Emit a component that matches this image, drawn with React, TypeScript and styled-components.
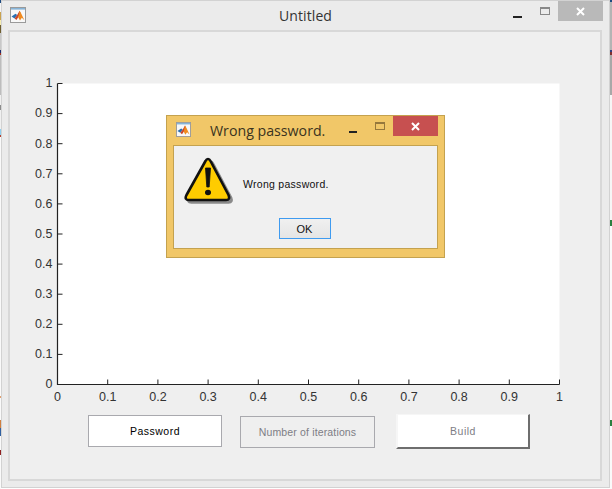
import React from "react";
import styled, { createGlobalStyle } from "styled-components";

const Global = createGlobalStyle`
  html, body { margin: 0; padding: 0; background: #fff; }
  #root { width: 612px; height: 489px; overflow: hidden; }
`;

const Desktop = styled.div`
  position: relative;
  width: 612px;
  height: 489px;
  overflow: hidden;
  background-color: #fff;
  background-image:
    linear-gradient(to bottom,
      #1d4a80 0 3px, #f4f4f4 3px 12px, #c9a24e 12px 20px, #f5ecb0 20px 25px, #6f5f30 25px 33px,
      #c8c8c8 33px 50px, #1c2c70 50px 53px, #a03020 53px 55px, #bdbdbd 55px 95px, #f0f0f0 95px 105px,
      #8c8c8c 105px 110px, #f0f0f0 110px 129px, #8fd0f0 129px 135px, #b04030 135px 137px, #fafafa 137px 396px,
      #e0a070 396px 398px, #fafafa 398px 420px, #d08040 420px 428px, #3060a0 428px 436px, #fafafa 436px 450px,
      #902020 450px 455px, #fafafa 455px),
    linear-gradient(to bottom,
      #1d4a80 0 2px, #b4b4b4 2px 50px, #304080 50px 52px, #803030 52px 55px, #a8a8a8 55px 95px,
      #f6f6f6 95px 220px, #2a8040 220px 226px, #fafafa 226px 420px, #2a8040 420px 426px, #fafafa 426px);
  background-size: 1px 100%, 2px 100%;
  background-position: left top, right top;
  background-repeat: no-repeat;
`;

const Win = styled.div`
  position: absolute;
  left: 1px;
  top: 0;
  width: 609px;
  height: 488px;
  box-sizing: border-box;
  border: 1px solid #d2d2d2;
  background: #ebebeb;
  display: flex;
  flex-direction: column;
  font-family: "Open Sans", "Noto Sans", sans-serif;
`;

const TitleBar = styled.div`
  height: 29px;
  flex: none;
  display: grid;
  grid-template-columns: 1fr auto 1fr;
  padding: 0 6px 0 8px;
`;

const IconCell = styled.div`
  padding-top: 6px;
  line-height: 0;
`;

const MainTitle = styled.div`
  font-size: 14px;
  line-height: 29px;
  color: #333;
  letter-spacing: 0.1px;
  padding-right: 2px;
`;

const Controls = styled.div`
  display: flex;
  align-items: flex-start;
  justify-content: flex-end;
  gap: 8px;
  line-height: 0;
`;

const MinBox = styled.div`
  margin-top: 12px;
  margin-right: 10px;
`;

const MaxBox = styled.div`
  margin-top: 6px;
`;

const CloseBtn = styled.div<{ $bg: string }>`
  width: 45px;
  height: 20px;
  background: ${(p) => p.$bg};
  display: flex;
  align-items: center;
  justify-content: center;
`;

const Client = styled.div`
  flex: 1;
  margin: 0 7px 6px 6px;
  background: #efefef;
  border: 2px solid #d8d8d8;
  box-sizing: border-box;
  display: flex;
  flex-direction: column;
`;

const PlotSvg = styled.svg`
  display: block;
  flex: none;
`;

const ButtonRow = styled.div`
  display: flex;
  align-items: flex-start;
  padding-left: 78px;
  margin-top: 9px;
`;

const Button = styled.div<{ $kind: "password" | "number" | "build" }>`
  box-sizing: border-box;
  display: flex;
  align-items: center;
  justify-content: center;
  font-family: "Liberation Sans", Arial, sans-serif;
  font-size: 10.5px;
  letter-spacing: ${(p) => (p.$kind === "number" ? 0.15 : 0.5)}px;
  width: ${(p) => (p.$kind === "number" ? 135 : 134)}px;
  height: ${(p) => (p.$kind === "build" ? 35 : 32)}px;
  color: ${(p) => (p.$kind === "password" ? "#000" : "#7d7d85")};
  background: ${(p) => (p.$kind === "number" ? "#efefef" : "#fff")};
  border: 1px solid #a9a9ae;
  margin-left: ${(p) => (p.$kind === "number" ? 18 : p.$kind === "build" ? 21 : 0)}px;
  margin-top: ${(p) => (p.$kind === "password" ? 1 : p.$kind === "number" ? 2 : 0)}px;
  ${(p) =>
    p.$kind === "build" &&
    `border-color: #f6f6f6 #6e6e6e #6e6e6e #f6f6f6; border-width: 1px 2px 2px 2px;`}
`;

const Dialog = styled.div`
  position: absolute;
  left: 166px;
  top: 115px;
  width: 279px;
  height: 143px;
  box-sizing: border-box;
  background: #f1c768;
  border: 1px solid #c4a24f;
  display: flex;
  flex-direction: column;
  font-family: "Open Sans", "Noto Sans", sans-serif;
`;

const DialogBar = styled.div`
  height: 29px;
  flex: none;
  display: flex;
  padding: 0 6px 0 9px;
`;

const DialogTitle = styled.div`
  flex: 1;
  font-size: 14.2px;
  line-height: 29px;
  color: #3a3320;
  margin-left: 19px;
`;

const DialogBody = styled.div`
  margin: 0 6px;
  height: 104px;
  box-sizing: border-box;
  background: #f0f0f0;
  border: 1px solid #c4a24f;
  display: flex;
  flex-direction: column;
  padding-top: 10px;
`;

const MessageRow = styled.div`
  display: flex;
  align-items: center;
  gap: 9px;
  padding-left: 10px;
  line-height: 0;
`;

const Message = styled.div`
  font-family: "Liberation Sans", Arial, sans-serif;
  font-size: 10.5px;
  line-height: 14px;
  color: #111;
  padding-top: 6px;
  letter-spacing: 0.28px;
`;

const DialogFooter = styled.div`
  display: flex;
  justify-content: center;
  margin-top: 12px;
  padding-right: 2px;
`;

const OkButton = styled.div`
  width: 52px;
  height: 21px;
  box-sizing: border-box;
  border: 1px solid #3f9bf0;
  background: linear-gradient(#f0f0f0, #e5e5e5);
  display: flex;
  align-items: center;
  justify-content: center;
  font-family: "Liberation Sans", Arial, sans-serif;
  font-size: 11px;
  color: #111;
`;

const MatlabIcon = ({ size }: { size: number }) => (
  <svg width={size} height={size} viewBox="0 0 16 16">
    <rect x="0.5" y="0.5" width="15" height="15" fill="#f8f8f8" stroke="#9a9a9a" />
    <rect x="1" y="1" width="14" height="1.6" fill="#86b4d8" />
    <path d="M1.5 9.6 L5.5 6.8 L7.2 8 L4.6 11.4 Z" fill="#2a6fb0" />
    <path d="M4.6 11.4 L7.2 8 L9.6 3.8 L10.6 6 L8.4 10 L6.4 13 Z" fill="#c9452a" />
    <path d="M9.6 3.8 L11.2 6.4 L14.4 13.2 L11.8 10.8 L10 13.6 L8.2 10.2 Z" fill="#f08a1e" />
  </svg>
);

const CloseGlyph = () => (
  <svg width="11" height="11" viewBox="0 0 11 11">
    <path d="M2 2 L9 9 M9 2 L2 9" stroke="#fff" strokeWidth="2" />
  </svg>
);

const MinGlyph = ({ w }: { w: number }) => (
  <svg width={w} height="3" viewBox={`0 0 ${w} 3`}>
    <rect width={w} height="2" y="0" fill="#222" />
  </svg>
);

const MaxGlyph = ({ color }: { color: string }) => (
  <svg width="10" height="8" viewBox="0 0 10 8">
    <rect x="0.5" y="0.5" width="9" height="7" fill="none" stroke={color} />
    <rect x="0.5" y="0.5" width="9" height="1.5" fill={color} />
  </svg>
);

const WarningIcon = () => (
  <svg width="50" height="50" viewBox="0 0 50 50">
    <path
      d="M24 3 Q22.5 3 21.5 5 L2.5 39 Q0 44 5 44 L42 44 Q46.5 44 44.5 39 L26.5 5 Q25.5 3 24 3 Z"
      fill="#8a8a8a"
      stroke="#8a8a8a"
      strokeWidth="2.6"
      strokeLinejoin="round"
      transform="translate(2.5 2.5)"
    />
    <path
      d="M24 3 Q22.5 3 21.5 5 L2.5 39 Q0 44 5 44 L42 44 Q46.5 44 44.5 39 L26.5 5 Q25.5 3 24 3 Z"
      fill="#ffcc00"
      stroke="#111"
      strokeWidth="2.6"
      strokeLinejoin="round"
    />
    <path d="M21.5 12 L26.5 12 L25.2 31 L22.8 31 Z" fill="#111" stroke="#111" strokeWidth="0.8" strokeLinejoin="round" />
    <ellipse cx="24" cy="36.5" rx="3" ry="2.8" fill="#111" />
  </svg>
);

const ticks = [0, 1, 2, 3, 4, 5, 6, 7, 8, 9, 10];
const label = (i: number) => (i === 0 ? "0" : i === 10 ? "1" : `0.${i}`);

const X0 = 47.5;
const Y0 = 352.5;
const W = 502;
const H = 301;
const TICK_FONT = "Liberation Sans, Arial, sans-serif";

const Plot = () => (
  <PlotSvg width="590" height="373" viewBox="0 0 590 373">
    <rect x={X0} y={Y0 - H} width={W} height={H} fill="#fff" />
    <path d={`M${X0} ${Y0 - H} V${Y0} H${X0 + W}`} fill="none" stroke="#222" strokeWidth="1.2" />
    {ticks.map((i) => {
      const x = X0 + (W * i) / 10;
      const y = Y0 - (H * i) / 10;
      return (
        <g key={i}>
          <path d={`M${x} ${Y0} v-5 M${X0} ${y} h5`} stroke="#222" strokeWidth="1" />
          <text x={x} y={Y0 + 16.5} textAnchor="middle" fontFamily={TICK_FONT} fontSize="12.5" fill="#333">
            {label(i)}
          </text>
          <text x={X0 - 5} y={y + 3.8} textAnchor="end" fontFamily={TICK_FONT} fontSize="12.5" fill="#333">
            {label(i)}
          </text>
        </g>
      );
    })}
  </PlotSvg>
);

const WindowControls = ({ closeBg, maxColor, minWidth }: { closeBg: string; maxColor: string; minWidth: number }) => (
  <Controls>
    <MinBox>
      <MinGlyph w={minWidth} />
    </MinBox>
    <MaxBox>
      <MaxGlyph color={maxColor} />
    </MaxBox>
    <CloseBtn $bg={closeBg}>
      <CloseGlyph />
    </CloseBtn>
  </Controls>
);

export default function App() {
  return (
    <Desktop>
      <Global />
      <Win>
        <TitleBar>
          <IconCell>
            <MatlabIcon size={16} />
          </IconCell>
          <MainTitle>Untitled</MainTitle>
          <WindowControls closeBg="#b9b9b9" maxColor="#888" minWidth={9} />
        </TitleBar>
        <Client>
          <Plot />
          <ButtonRow>
            <Button $kind="password">Password</Button>
            <Button $kind="number">Number of iterations</Button>
            <Button $kind="build">Build</Button>
          </ButtonRow>
        </Client>
      </Win>
      <Dialog>
        <DialogBar>
          <IconCell>
            <MatlabIcon size={15} />
          </IconCell>
          <DialogTitle>Wrong password.</DialogTitle>
          <WindowControls closeBg="#c75050" maxColor="#96783c" minWidth={8} />
        </DialogBar>
        <DialogBody>
          <MessageRow>
            <WarningIcon />
            <Message>Wrong password.</Message>
          </MessageRow>
          <DialogFooter>
            <OkButton>OK</OkButton>
          </DialogFooter>
        </DialogBody>
      </Dialog>
    </Desktop>
  );
}
